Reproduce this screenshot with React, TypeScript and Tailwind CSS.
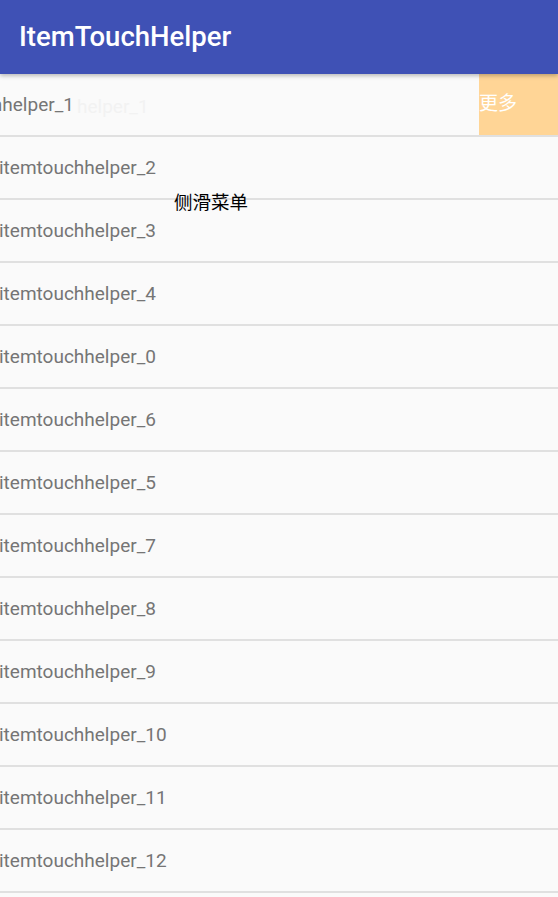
import React from 'react';

const items = ['2', '3', '4', '0', '6', '5', '7', '8', '9', '10', '11', '12'];

export default function App() {
  return (
    <div className="relative h-[897px] w-[558px] overflow-hidden bg-[#fafafa] font-['Roboto','Noto_Sans_CJK_SC',sans-serif]">
      <div className="relative z-10 flex h-[74px] items-center bg-[#3f51b5] pl-[19px] shadow-[0_2px_4px_rgba(0,0,0,0.25)]">
        <span className="text-[27.5px] font-medium text-white">ItemTouchHelper</span>
      </div>

      {/* swiped row */}
      <div className="relative flex h-[63px] border-b-2 border-[#e0e0e0]">
        <div className="flex flex-1 items-center overflow-hidden pt-[2px]">
          <span className="ml-[-83px] whitespace-nowrap text-[19px] text-[#757575]">itemtouchhelper_1</span>
        </div>
        <span className="pointer-events-none absolute left-[77px] top-[19px] text-[19px] text-[#f2f2f2]">helper_1</span>
        <div className="flex w-[79px] items-center bg-[#ffd596] text-[19px] text-white">更多</div>
      </div>

      {items.map((n) => (
        <div key={n} className="flex h-[63px] items-center border-b-2 border-[#e0e0e0] pt-[2px]">
          <span className="ml-[-1px] text-[19px] text-[#757575]">itemtouchhelper_{n}</span>
        </div>
      ))}

      <span className="absolute left-[174px] top-[190px] text-[18.5px] text-black">侧滑菜单</span>
    </div>
  );
}
